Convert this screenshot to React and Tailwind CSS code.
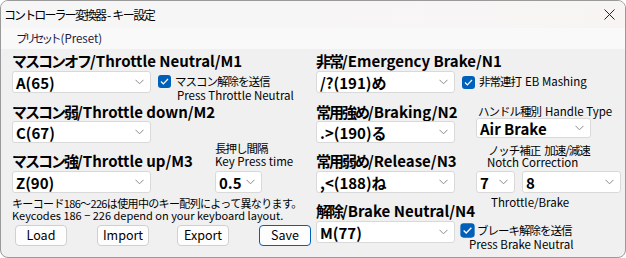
import React from "react";

const F = { fontFamily: '"Noto Sans CJK JP", "Noto Sans", sans-serif' };

function Chevron() {
  return (
    <svg width="9" height="6" viewBox="0 0 9 6" className="shrink-0">
      <path d="M0.5 0.8 L4.5 4.8 L8.5 0.8" fill="none" stroke="#8a8a8a" strokeWidth="1" />
    </svg>
  );
}

function Sel({ value, w, h = 22 }) {
  return (
    <div
      className="flex items-center justify-between bg-white border border-[#d9d9d9] rounded-[3px] pl-[3px] pr-[6px] shrink-0"
      style={{ width: w, height: h }}
    >
      <span className="text-[15px] leading-none text-black font-bold whitespace-nowrap">{value}</span>
      <Chevron />
    </div>
  );
}

function Check() {
  return (
    <div className="w-[13px] h-[13px] rounded-[3px] bg-[#005fb8] flex items-center justify-center shrink-0">
      <svg width="9" height="7" viewBox="0 0 9 7">
        <path d="M1 3.5 L3.3 5.8 L8 1" fill="none" stroke="white" strokeWidth="1.2" />
      </svg>
    </div>
  );
}

function Label({ jp, en }) {
  return (
    <div className="text-[15px] font-bold leading-[15px] h-[15px] text-black whitespace-nowrap">
      <span className="tracking-[-2px]">{jp}</span>
      <span>{en}</span>
    </div>
  );
}

function Btn({ children, save }) {
  return (
    <div
      className={`h-[21px] w-[52px] flex items-center justify-center bg-[#fdfdfd] rounded-[4px] text-[12.5px] leading-none text-black border ${
        save ? "border-[#005fb8]" : "border-[#d0d0d0]"
      }`}
    >
      {children}
    </div>
  );
}

const jp = "tracking-[-1px]";

export default function App() {
  return (
    <div className="w-[626px] h-[258px] bg-white" style={F}>
      <div className="w-[626px] h-[258px] flex flex-col border border-[#9a9a9a] rounded-[8px] overflow-hidden bg-[#f0f0f0]">
        {/* Title bar */}
        <div className="h-[27px] flex items-center justify-between bg-gradient-to-r from-[#f6f6f6] via-[#f7f6f6] to-[#f8f4f4] pl-[3px] pr-[10px] shrink-0">
          <span className="text-[12px] leading-none text-black whitespace-nowrap">
            <span className="tracking-[-1.9px]">コントローラー変換器</span>
            <span className="ml-[2px] mr-[1px]">-</span>
            <span className="tracking-[-1.5px]">キー設定</span>
          </span>
          <svg width="11" height="11" viewBox="0 0 11 11">
            <path d="M0.5 0.5 L10.5 10.5 M10.5 0.5 L0.5 10.5" stroke="#222" strokeWidth="1" />
          </svg>
        </div>
        {/* Menu bar */}
        <div className="h-[21px] flex items-center bg-[#f9f9f9] pl-[15px] shrink-0">
          <span className="text-[11.5px] leading-none text-[#1a1a40] whitespace-nowrap">
            <span className="tracking-[-3px]">プリセット</span>
            <span className="ml-[2px]">(Preset)</span>
          </span>
        </div>
        {/* Body */}
        <div className="flex pl-[11px] pt-[4px]">
          {/* Left column */}
          <div className="w-[304px] flex flex-col">
            <Label jp="マスコンオフ" en="/Throttle Neutral/M1" />
            <div className="flex mt-[3px] h-[22px]">
              <Sel value="A(65)" w={139} />
              <div className="ml-[7px] flex flex-col pt-[4px]">
                <div className="flex items-center gap-[4px]">
                  <Check />
                  <span className={`text-[11.5px] leading-none whitespace-nowrap ${jp}`}>マスコン解除を送信</span>
                </div>
                <span className="text-[11.5px] leading-none ml-[19px] mt-[2px] whitespace-nowrap">Press Throttle Neutral</span>
              </div>
            </div>
            <div className="mt-[11px]"><Label jp="マスコン弱" en="/Throttle down/M2" /></div>
            <div className="mt-[2px]"><Sel value="C(67)" w={139} /></div>
            <div className="flex items-end h-[25px]">
              <div className="w-[203px]"><Label jp="マスコン強" en="/Throttle up/M3" /></div>
              <div className="flex flex-col text-[11.5px] leading-[13px]">
                <span className={jp}>長押し間隔</span>
                <span className="whitespace-nowrap">Key Press time</span>
              </div>
            </div>
            <div className="flex mt-[3px]">
              <div className="w-[203px]"><Sel value="Z(90)" w={139} /></div>
              <Sel value="0.5" w={47} />
            </div>
            <div className="mt-[4px] leading-[12px] whitespace-nowrap">
              <div className="text-[11px] tracking-[-0.65px]">キーコード186～226は使用中のキー配列によって異なります。</div>
              <div className="text-[11px]">Keycodes 186 − 226 depend on your keyboard layout.</div>
            </div>
            <div className="flex mt-[4px] pl-[3px] gap-[30px]">
              <Btn>Load</Btn>
              <Btn>Import</Btn>
              <div className="-ml-[2px]"><Btn>Export</Btn></div>
              <Btn save>Save</Btn>
            </div>
          </div>
          {/* Right column */}
          <div className="flex flex-col w-[306px]">
            <Label jp="非常" en="/Emergency Brake/N1" />
            <div className="flex mt-[3px] h-[22px] items-center">
              <Sel value="/?(191)め" w={139} />
              <div className="ml-[7px] flex items-center gap-[4px]">
                <Check />
                <span className="text-[11.5px] leading-none whitespace-nowrap">
                  <span className={jp}>非常連打</span>
                  <span className="ml-[4px]">EB Mashing</span>
                </span>
              </div>
            </div>
            <div className="flex items-center mt-[11px] h-[15px]">
              <div className="w-[162px]"><Label jp="常用強め" en="/Braking/N2" /></div>
              <span className="text-[11.5px] leading-none whitespace-nowrap">
                <span className={jp}>ハンドル種別</span>
                <span className="ml-[4px]">Handle Type</span>
              </span>
            </div>
            <div className="flex mt-[2px]">
              <Sel value=".>(190)る" w={139} />
              <div className="ml-[21px] -mt-[3px]"><Sel value="Air Brake" w={115} h={20} /></div>
            </div>
            <div className="flex items-end h-[25px]">
              <div className="w-[171px]"><Label jp="常用弱め" en="/Release/N3" /></div>
              <div className="flex flex-col text-[11.5px] leading-[12px] whitespace-nowrap">
                <span className="ml-[1px]">
                  <span className={jp}>ノッチ補正</span>
                  <span className={`ml-[4px] ${jp}`}>加速/減速</span>
                </span>
                <span>Notch Correction</span>
              </div>
            </div>
            <div className="flex mt-[3px]">
              <Sel value=",<(188)ね" w={139} />
              <div className="ml-[21px]"><Sel value="7" w={39} /></div>
              <div className="ml-[7px]"><Sel value="8" w={99} /></div>
            </div>
            <div className="flex h-[25px]">
              <div className="w-[175px] flex items-end"><Label jp="解除" en="/Brake Neutral/N4" /></div>
              <span className="mt-[3px] text-[11.5px] leading-[12px] whitespace-nowrap">Throttle/Brake</span>
            </div>
            <div className="flex mt-[3px] h-[22px]">
              <Sel value="M(77)" w={139} />
              <div className="ml-[6px] flex flex-col pt-[3px]">
                <div className="flex items-center gap-[3px]">
                  <div className="scale-110"><Check /></div>
                  <span className={`text-[11.5px] leading-none whitespace-nowrap ${jp}`}>ブレーキ解除を送信</span>
                </div>
                <span className="text-[11.5px] leading-none ml-[8px] mt-[2px] whitespace-nowrap">Press Brake Neutral</span>
              </div>
            </div>
          </div>
        </div>
      </div>
    </div>
  );
}
